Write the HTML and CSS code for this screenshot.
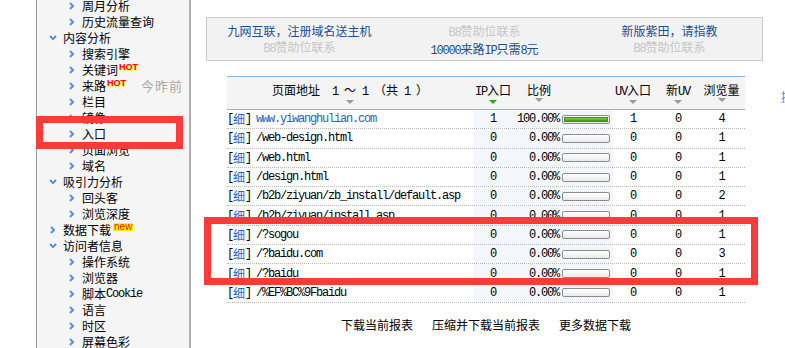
FILE: index.html
```html
<!DOCTYPE html>
<html lang="zh-CN">
<head>
<meta charset="utf-8">
<title>入口</title>
<link rel="stylesheet" href="styles.css">
</head>
<body>
<div class="page">
  <aside class="side">
    <ul class="menu">
      <li class="sub"><svg class="ic" viewBox="0 0 8 8"><polyline points="1,1 4,4 1,7"/></svg>周月分析</li>
      <li class="sub"><svg class="ic" viewBox="0 0 8 8"><polyline points="1,1 4,4 1,7"/></svg>历史流量查询</li>
      <li class="grp"><svg class="ic" viewBox="0 0 8 8"><polyline points="1,2 4,5 7,2"/></svg>内容分析</li>
      <li class="sub"><svg class="ic" viewBox="0 0 8 8"><polyline points="1,1 4,4 1,7"/></svg>搜索引擎</li>
      <li class="sub"><svg class="ic" viewBox="0 0 8 8"><polyline points="1,1 4,4 1,7"/></svg>关键词<span class="hot">HOT</span></li>
      <li class="sub"><svg class="ic" viewBox="0 0 8 8"><polyline points="1,1 4,4 1,7"/></svg>来路<span class="hot">HOT</span><span class="rt">今昨前</span></li>
      <li class="sub"><svg class="ic" viewBox="0 0 8 8"><polyline points="1,1 4,4 1,7"/></svg>栏目</li>
      <li class="sub"><svg class="ic" viewBox="0 0 8 8"><polyline points="1,1 4,4 1,7"/></svg>镜像</li>
      <li class="sub"><svg class="ic" viewBox="0 0 8 8"><polyline points="1,1 4,4 1,7"/></svg>入口</li>
      <li class="sub"><svg class="ic" viewBox="0 0 8 8"><polyline points="1,1 4,4 1,7"/></svg>页面浏览</li>
      <li class="sub"><svg class="ic" viewBox="0 0 8 8"><polyline points="1,1 4,4 1,7"/></svg>域名</li>
      <li class="grp"><svg class="ic" viewBox="0 0 8 8"><polyline points="1,2 4,5 7,2"/></svg>吸引力分析</li>
      <li class="sub"><svg class="ic" viewBox="0 0 8 8"><polyline points="1,1 4,4 1,7"/></svg>回头客</li>
      <li class="sub"><svg class="ic" viewBox="0 0 8 8"><polyline points="1,1 4,4 1,7"/></svg>浏览深度</li>
      <li class="grp"><svg class="ic" viewBox="0 0 8 8"><polyline points="2,1 5,4 2,7"/></svg>数据下载<span class="new">new</span></li>
      <li class="grp"><svg class="ic" viewBox="0 0 8 8"><polyline points="1,2 4,5 7,2"/></svg>访问者信息</li>
      <li class="sub"><svg class="ic" viewBox="0 0 8 8"><polyline points="1,1 4,4 1,7"/></svg>操作系统</li>
      <li class="sub"><svg class="ic" viewBox="0 0 8 8"><polyline points="1,1 4,4 1,7"/></svg>浏览器</li>
      <li class="sub"><svg class="ic" viewBox="0 0 8 8"><polyline points="1,1 4,4 1,7"/></svg>脚本<span class="a">Cookie</span></li>
      <li class="sub"><svg class="ic" viewBox="0 0 8 8"><polyline points="1,1 4,4 1,7"/></svg>语言</li>
      <li class="sub"><svg class="ic" viewBox="0 0 8 8"><polyline points="1,1 4,4 1,7"/></svg>时区</li>
      <li class="sub"><svg class="ic" viewBox="0 0 8 8"><polyline points="1,1 4,4 1,7"/></svg>屏幕色彩</li>
    </ul>
  </aside>

  <main class="main">
    <div class="banner">
      <div class="bcol"><span class="bl">九网互联，注册域名送主机</span><span class="bg"><span class="a">B8</span>赞助位联系</span></div>
      <div class="bcol"><span class="bg"><span class="a">B8</span>赞助位联系</span><span class="bl"><span class="a">10000</span>来路<span class="a">IP</span>只需<span class="a">8</span>元</span></div>
      <div class="bcol"><span class="bl">新版紫田，请指教</span><span class="bg"><span class="a">B8</span>赞助位联系</span></div>
    </div>

    <div class="tbl">
      <div class="thead">
        <div class="th">页面地址<span class="a">  1 </span>～<span class="a"> 1 </span>（共<span class="a"> 1 </span>）<svg class="sa" viewBox="0 0 8 4"><polygon points="0,0 8,0 4,4"/></svg></div>
        <div class="th"><span class="a">IP</span>入口<svg class="sa on" viewBox="0 0 8 4"><polygon points="0,0 8,0 4,4"/></svg></div>
        <div class="th th-l"><span class="thi">比例<svg class="sa" viewBox="0 0 8 4"><polygon points="0,0 8,0 4,4"/></svg></span></div>
        <div class="th"><span class="a">UV</span>入口<svg class="sa" viewBox="0 0 8 4"><polygon points="0,0 8,0 4,4"/></svg></div>
        <div class="th">新<span class="a">UV</span><svg class="sa" viewBox="0 0 8 4"><polygon points="0,0 8,0 4,4"/></svg></div>
        <div class="th th-last">浏览量<svg class="sa" viewBox="0 0 8 4"><polygon points="0,0 8,0 4,4"/></svg></div>
      </div>

      <div class="tr">
        <div class="td url"><span class="a">[</span><span class="x">细</span><span class="a">]</span><span class="a u lk">www.yiwanghulian.com</span></div>
        <div class="td num hl"><span class="a">1</span></div>
        <div class="td pc hl"><span class="a p">100.00%</span><span class="bar"><span class="fill" style="width:100%"></span></span></div>
        <div class="td num"><span class="a">1</span></div>
        <div class="td num"><span class="a">0</span></div>
        <div class="td num last"><span class="a">4</span></div>
      </div>
      <div class="tr">
        <div class="td url"><span class="a">[</span><span class="x">细</span><span class="a">]</span><span class="a u">/web-design.html</span></div>
        <div class="td num hl"><span class="a">0</span></div>
        <div class="td pc hl"><span class="a p">0.00%</span><span class="bar"></span></div>
        <div class="td num"><span class="a">0</span></div>
        <div class="td num"><span class="a">0</span></div>
        <div class="td num last"><span class="a">1</span></div>
      </div>
      <div class="tr">
        <div class="td url"><span class="a">[</span><span class="x">细</span><span class="a">]</span><span class="a u">/web.html</span></div>
        <div class="td num hl"><span class="a">0</span></div>
        <div class="td pc hl"><span class="a p">0.00%</span><span class="bar"></span></div>
        <div class="td num"><span class="a">0</span></div>
        <div class="td num"><span class="a">0</span></div>
        <div class="td num last"><span class="a">1</span></div>
      </div>
      <div class="tr">
        <div class="td url"><span class="a">[</span><span class="x">细</span><span class="a">]</span><span class="a u">/design.html</span></div>
        <div class="td num hl"><span class="a">0</span></div>
        <div class="td pc hl"><span class="a p">0.00%</span><span class="bar"></span></div>
        <div class="td num"><span class="a">0</span></div>
        <div class="td num"><span class="a">0</span></div>
        <div class="td num last"><span class="a">1</span></div>
      </div>
      <div class="tr">
        <div class="td url"><span class="a">[</span><span class="x">细</span><span class="a">]</span><span class="a u">/b2b/ziyuan/zb_install/default.asp</span></div>
        <div class="td num hl"><span class="a">0</span></div>
        <div class="td pc hl"><span class="a p">0.00%</span><span class="bar"></span></div>
        <div class="td num"><span class="a">0</span></div>
        <div class="td num"><span class="a">0</span></div>
        <div class="td num last"><span class="a">2</span></div>
      </div>
      <div class="tr">
        <div class="td url"><span class="a">[</span><span class="x">细</span><span class="a">]</span><span class="a u">/b2b/ziyuan/install.asp</span></div>
        <div class="td num hl"><span class="a">0</span></div>
        <div class="td pc hl"><span class="a p">0.00%</span><span class="bar"></span></div>
        <div class="td num"><span class="a">0</span></div>
        <div class="td num"><span class="a">0</span></div>
        <div class="td num last"><span class="a">1</span></div>
      </div>
      <div class="tr">
        <div class="td url"><span class="a">[</span><span class="x">细</span><span class="a">]</span><span class="a u">/?sogou</span></div>
        <div class="td num hl"><span class="a">0</span></div>
        <div class="td pc hl"><span class="a p">0.00%</span><span class="bar"></span></div>
        <div class="td num"><span class="a">0</span></div>
        <div class="td num"><span class="a">0</span></div>
        <div class="td num last"><span class="a">1</span></div>
      </div>
      <div class="tr">
        <div class="td url"><span class="a">[</span><span class="x">细</span><span class="a">]</span><span class="a u">/?baidu.com</span></div>
        <div class="td num hl"><span class="a">0</span></div>
        <div class="td pc hl"><span class="a p">0.00%</span><span class="bar"></span></div>
        <div class="td num"><span class="a">0</span></div>
        <div class="td num"><span class="a">0</span></div>
        <div class="td num last"><span class="a">3</span></div>
      </div>
      <div class="tr">
        <div class="td url"><span class="a">[</span><span class="x">细</span><span class="a">]</span><span class="a u">/?baidu</span></div>
        <div class="td num hl"><span class="a">0</span></div>
        <div class="td pc hl"><span class="a p">0.00%</span><span class="bar"></span></div>
        <div class="td num"><span class="a">0</span></div>
        <div class="td num"><span class="a">0</span></div>
        <div class="td num last"><span class="a">1</span></div>
      </div>
      <div class="tr">
        <div class="td url"><span class="a">[</span><span class="x">细</span><span class="a">]</span><span class="a u">/%EF%BC%9Fbaidu</span></div>
        <div class="td num hl"><span class="a">0</span></div>
        <div class="td pc hl"><span class="a p">0.00%</span><span class="bar"></span></div>
        <div class="td num"><span class="a">0</span></div>
        <div class="td num"><span class="a">0</span></div>
        <div class="td num last"><span class="a">1</span></div>
      </div>
    </div>

    <div class="dl">
      <span>下载当前报表</span>
      <span>压缩并下载当前报表</span>
      <span>更多数据下载</span>
    </div>
  </main>

  <div class="mark m1"></div>
  <div class="mark m2"></div>
  <span class="edge">提</span>
</div>
</body>
</html>
```

FILE: styles.css
```css
* { box-sizing: border-box; margin: 0; padding: 0; }

html, body {
  width: 785px;
  height: 348px;
  overflow: hidden;
  background: #fff;
}

body {
  font: 12px/16px "Noto Sans CJK SC", "Noto Sans", sans-serif;
  color: #000;
}

.a {
  font-family: "Liberation Mono", "Noto Sans CJK SC", monospace;
  font-size: 12px;
  letter-spacing: -1.2px;
  white-space: pre;
}

.page {
  position: relative;
  display: flex;
  height: 348px;
}

/* ---------- sidebar ---------- */
.side {
  flex: none;
  margin-left: 36px;
  width: 155px;
  height: 348px;
  background: #f5f5f5;
  border-left: 1px solid #9c9c9c;
  border-right: 2px solid #b0b0b0;
  overflow: hidden;
}

.menu {
  list-style: none;
  margin-top: -2px;
}

.menu li {
  display: flex;
  align-items: center;
  height: 16px;
  white-space: nowrap;
}

.menu .grp { padding-left: 12px; }
.menu .sub { padding-left: 32px; }

.ic {
  flex: none;
  display: block;
  width: 8px;
  height: 8px;
  margin-right: 6px;
  fill: none;
  stroke: #4f93de;
  stroke-width: 2;
}

.sub .ic { margin-right: 5px; }

.hot {
  align-self: flex-start;
  margin: 1px 0 0 1px;
  font: bold 9px/9px "Liberation Sans", sans-serif;
  color: #f00;
  text-shadow: 1px 1px 0 #ff0;
}

.new {
  align-self: flex-start;
  margin: 1px 0 0 2px;
  padding: 0 1px;
  font: 10px/8px "Liberation Sans", sans-serif;
  color: #e00;
  background: #ff0;
}

.rt {
  margin-left: auto;
  margin-right: 6px;
  font-size: 13px;
  letter-spacing: 1px;
  color: #a8a8a8;
}

/* ---------- main ---------- */
.main {
  flex: 1;
  padding: 17px 0 0 15px;
}

.banner {
  width: 557px;
  height: 44px;
  padding-top: 5px;
  border: 1px solid #cbcbcb;
  background: #f2f2f2;
  display: grid;
  grid-template-columns: repeat(3, 1fr);
  text-align: center;
  line-height: 16px;
}

.bcol {
  display: flex;
  flex-direction: column;
  align-items: center;
  white-space: nowrap;
}

.bl { color: #1c4e92; }
.bg { color: #c6c6c6; }

/* ---------- table ---------- */
.tbl {
  margin: 15px 0 0 21px;
  width: 518px;
  border-top: 1px solid #84b6ee;
}

.thead, .tr {
  display: grid;
  grid-template-columns: 246px 40px 100px 40px 50px 42px;
}

.thead {
  height: 33px;
  background: #f4f4f4;
  border-bottom: 1px solid #84b6ee;
}

.th {
  padding-top: 6px;
  line-height: 14px;
  text-align: center;
  white-space: nowrap;
}

.th-l {
  text-align: left;
  padding-left: 14px;
}

.thi {
  display: inline-block;
  text-align: center;
}

.th-last { padding-right: 5px; }

.sa {
  display: block;
  width: 8px;
  height: 4px;
  margin: 1px auto 0;
  fill: #9a9a9a;
}

.sa.on { fill: #2fae1a; }

.tr {
  height: 19.3px;
  border-bottom: 1px dotted #b8b8b8;
}

.td {
  display: flex;
  align-items: center;
  white-space: nowrap;
}

.hl { background: #f3f7fc; }

.num { justify-content: center; }
.num.last { padding-right: 5px; }

.url { overflow: hidden; }
.x { color: #1a66cc; }
.u { margin-left: 5px; }
.lk { color: #1f5fbf; }

.pc { padding-right: 3px; }

.p {
  width: 46px;
  text-align: right;
}

.bar {
  display: block;
  width: 48px;
  height: 9px;
  margin-left: 3px;
  padding: 1px;
  border: 1px solid #8c8c8c;
  border-radius: 2px;
  background: linear-gradient(#ffffff, #e9e9e9);
}

.fill {
  display: block;
  height: 100%;
  border: 1px solid #3c8f12;
  background: linear-gradient(#7fd43f, #3a9c10);
}

/* ---------- downloads ---------- */
.dl {
  margin: 14px 0 0 21px;
  width: 518px;
  display: flex;
  justify-content: center;
  gap: 19px;
  line-height: 16px;
}

/* ---------- annotations ---------- */
.mark {
  position: absolute;
  border: 7px solid #fc3a3a;
}

.m1 {
  left: 36px;
  top: 116px;
  width: 147px;
  height: 33px;
}

.m2 {
  left: 204px;
  top: 217px;
  width: 554px;
  height: 68px;
}

.edge {
  position: absolute;
  left: 781px;
  top: 89px;
  font-size: 12px;
  color: #3a8ee6;
}
```
